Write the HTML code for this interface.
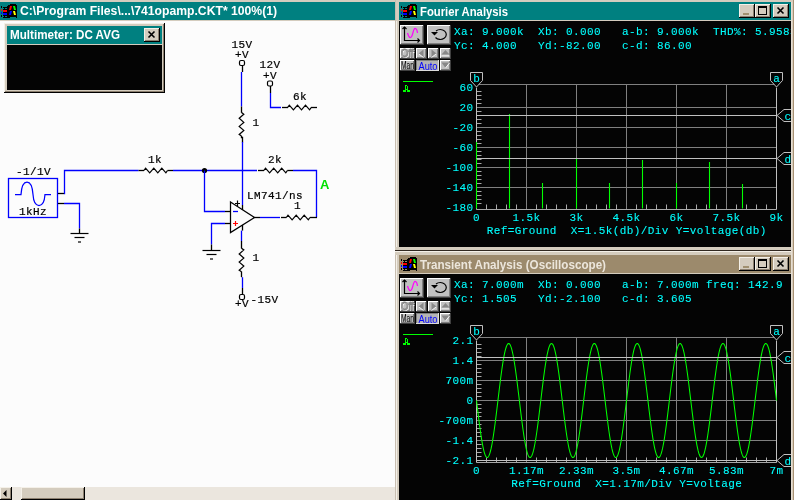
<!DOCTYPE html>
<html><head><meta charset="utf-8"><style>
html,body{margin:0;padding:0;width:794px;height:500px;overflow:hidden;background:#d4ccbe}
svg{display:block;will-change:transform}
.title{font-family:"Liberation Sans",sans-serif;font-weight:bold;font-size:12px;fill:#ffffff}
.mono{font-family:"Liberation Mono",monospace;font-size:11px;letter-spacing:0.4px;fill:#00ffff;stroke:#00ffff;stroke-width:0.1px}
.circ{font-family:"Liberation Mono",monospace;font-size:11px;letter-spacing:0.4px;fill:#000;stroke:#000;stroke-width:0.2px}
.small{font-family:"Liberation Sans",sans-serif;font-size:11px}
.legend{font-family:"Liberation Mono",monospace;font-size:9px;fill:#00ff00}
.A{font-family:"Liberation Sans",sans-serif;font-weight:bold;font-size:13px;fill:#00e000}
</style></head><body>
<svg width="794" height="500" viewBox="0 0 794 500">
<rect x="0" y="0" width="794" height="500" fill="#d4ccbe"/>
<rect x="0" y="2" width="395" height="18" fill="#008080"/>
<rect x="0" y="21" width="395" height="466" fill="#fcfcfc"/>
<g shape-rendering="crispEdges">
<path d="M7 6 L9 5 L10 5 L10 4 L16 4 L16 5 L17 5 L17 18 L16 18 L16 17 L10 17 L10 18 L7 18 Z" fill="#000"/>
</g>
<path d="M10 6 L12 6 L11 10 L9 10 Z" fill="#ff0000"/>
<path d="M10 11 L12 11 L11 15 L9 15 Z" fill="#0000ff"/>
<path d="M13 6 L15 6 L16 10 L14 10 Z" fill="#00ff00"/>
<path d="M13 11 L15 11 L16 15 L14 15 Z" fill="#ffff00"/>
<g shape-rendering="crispEdges">
<rect x="3" y="7" width="4" height="1" fill="#000"/>
<rect x="3" y="9" width="4" height="1" fill="#000"/>
<rect x="3" y="10" width="4" height="2" fill="#ff0000"/>
<rect x="3" y="12" width="4" height="1" fill="#000"/>
<rect x="3" y="13" width="4" height="2" fill="#0000ff"/>
<rect x="3" y="15" width="4" height="1" fill="#000"/>
<rect x="3" y="17" width="4" height="1" fill="#000"/>
<rect x="4" y="8" width="1" height="1" fill="#000"/>
<rect x="4" y="16" width="1" height="1" fill="#000"/>
<rect x="1" y="6" width="1" height="2" fill="#000"/>
<rect x="1" y="9" width="1" height="2" fill="#ff0000"/>
<rect x="1" y="12" width="1" height="2" fill="#0000ff"/>
<rect x="1" y="15" width="1" height="2" fill="#000"/>
</g>
<text x="20" y="15" class="title" textLength="257" lengthAdjust="spacingAndGlyphs">C:\Program Files\...\741opamp.CKT* 100%(1)</text>
<rect x="0" y="487" width="395" height="13" fill="#ebe6de"/>
<rect x="0" y="487" width="12" height="13" fill="#000"/>
<rect x="0" y="487" width="11" height="12" fill="#f4f0e8"/>
<rect x="1" y="488" width="10" height="11" fill="#8c8070"/>
<rect x="1" y="488" width="9" height="10" fill="#d4ccbe"/>
<path d="M3 493.5 L6.5 490 L6.5 497 Z" fill="#000"/>
<rect x="21" y="487" width="64" height="13" fill="#000"/>
<rect x="21" y="487" width="63" height="12" fill="#f4f0e8"/>
<rect x="22" y="488" width="62" height="11" fill="#8c8070"/>
<rect x="22" y="488" width="61" height="10" fill="#d4ccbe"/>
<rect x="395" y="0" width="4" height="500" fill="#d4ccbe"/>
<line x1="395.5" y1="0" x2="395.5" y2="500" stroke="#c8beb0" stroke-width="1"/>
<line x1="396.5" y1="21" x2="396.5" y2="500" stroke="#f4f0e8" stroke-width="1"/>
<rect x="4" y="23" width="161" height="70" fill="#d4ccbe"/>
<line x1="4.5" y1="23" x2="4.5" y2="92" stroke="#f4f0e8" stroke-width="1"/>
<line x1="4" y1="23.5" x2="164" y2="23.5" stroke="#f4f0e8" stroke-width="1"/>
<line x1="164.5" y1="23" x2="164.5" y2="93" stroke="#000" stroke-width="1"/>
<line x1="4" y1="92.5" x2="165" y2="92.5" stroke="#000" stroke-width="1"/>
<line x1="163.5" y1="24" x2="163.5" y2="92" stroke="#8c8070" stroke-width="1"/>
<line x1="5" y1="91.5" x2="164" y2="91.5" stroke="#8c8070" stroke-width="1"/>
<rect x="7" y="26" width="155" height="18" fill="#008080"/>
<rect x="7" y="45" width="155" height="45" fill="#040404"/>
<text x="10" y="39.2" class="title" textLength="110" lengthAdjust="spacingAndGlyphs">Multimeter: DC AVG</text>
<rect x="144" y="28" width="16" height="14" fill="#000"/>
<rect x="144" y="28" width="15" height="13" fill="#f4f0e8"/>
<rect x="145" y="29" width="14" height="12" fill="#8c8070"/>
<rect x="145" y="29" width="13" height="11" fill="#d4ccbe"/>
<path d="M148.5 31.5 L154.5 37.5 M154.5 31.5 L148.5 37.5" stroke="#000" stroke-width="1.6"/>
<rect x="399" y="2" width="392" height="18" fill="#008080"/>
<g shape-rendering="crispEdges">
<path d="M407 6 L409 5 L410 5 L410 4 L416 4 L416 5 L417 5 L417 18 L416 18 L416 17 L410 17 L410 18 L407 18 Z" fill="#000"/>
</g>
<path d="M410 6 L412 6 L411 10 L409 10 Z" fill="#ff0000"/>
<path d="M410 11 L412 11 L411 15 L409 15 Z" fill="#0000ff"/>
<path d="M413 6 L415 6 L416 10 L414 10 Z" fill="#00ff00"/>
<path d="M413 11 L415 11 L416 15 L414 15 Z" fill="#ffff00"/>
<g shape-rendering="crispEdges">
<rect x="403" y="7" width="4" height="1" fill="#000"/>
<rect x="403" y="9" width="4" height="1" fill="#000"/>
<rect x="403" y="10" width="4" height="2" fill="#ff0000"/>
<rect x="403" y="12" width="4" height="1" fill="#000"/>
<rect x="403" y="13" width="4" height="2" fill="#0000ff"/>
<rect x="403" y="15" width="4" height="1" fill="#000"/>
<rect x="403" y="17" width="4" height="1" fill="#000"/>
<rect x="404" y="8" width="1" height="1" fill="#000"/>
<rect x="404" y="16" width="1" height="1" fill="#000"/>
<rect x="401" y="6" width="1" height="2" fill="#000"/>
<rect x="401" y="9" width="1" height="2" fill="#ff0000"/>
<rect x="401" y="12" width="1" height="2" fill="#0000ff"/>
<rect x="401" y="15" width="1" height="2" fill="#000"/>
</g>
<text x="420" y="16" class="title" textLength="88" lengthAdjust="spacingAndGlyphs">Fourier Analysis</text>
<rect x="773" y="4" width="16" height="14" fill="#000"/>
<rect x="773" y="4" width="15" height="13" fill="#f4f0e8"/>
<rect x="774" y="5" width="14" height="12" fill="#8c8070"/>
<rect x="774" y="5" width="13" height="11" fill="#d4ccbe"/>
<path d="M777.5 7.5 L783.5 13.5 M783.5 7.5 L777.5 13.5" stroke="#000" stroke-width="1.6"/>
<rect x="755" y="4" width="16" height="14" fill="#000"/>
<rect x="755" y="4" width="15" height="13" fill="#f4f0e8"/>
<rect x="756" y="5" width="14" height="12" fill="#8c8070"/>
<rect x="756" y="5" width="13" height="11" fill="#d4ccbe"/>
<rect x="758.5" y="6.5" width="8" height="8" fill="none" stroke="#000" stroke-width="1"/>
<rect x="758" y="6" width="9" height="2" fill="#000"/>
<rect x="739" y="4" width="16" height="14" fill="#000"/>
<rect x="739" y="4" width="15" height="13" fill="#f4f0e8"/>
<rect x="740" y="5" width="14" height="12" fill="#8c8070"/>
<rect x="740" y="5" width="13" height="11" fill="#d4ccbe"/>
<rect x="743" y="13" width="6" height="2" fill="#a09070"/>
<rect x="399" y="21" width="392" height="232" fill="#040404"/>
<rect x="400" y="25" width="24" height="20" fill="#404040"/>
<rect x="400" y="25" width="23" height="19" fill="#ffffff"/>
<rect x="401" y="26" width="22" height="18" fill="#808080"/>
<rect x="401" y="26" width="21" height="17" fill="#c0c0c0"/>
<rect x="427" y="25" width="24" height="20" fill="#404040"/>
<rect x="427" y="25" width="23" height="19" fill="#ffffff"/>
<rect x="428" y="26" width="22" height="18" fill="#808080"/>
<rect x="428" y="26" width="21" height="17" fill="#c0c0c0"/>
<path d="M404.5 27 L404.5 40.5 L419.5 40.5" stroke="#000" stroke-width="1.2" fill="none"/>
<path d="M402.5 29 L404.5 27 L406.5 29 M417.5 38.5 L419.5 40.5 L417.5 42.5" stroke="#000" stroke-width="1.2" fill="none"/>
<path d="M407.5 33 Q409 38 410.5 37.5 Q412 37 413 32.5 Q414 28 415.5 28.5 Q417 29 417.5 33" stroke="#ff00ff" stroke-width="1.2" fill="none"/>
<path d="M436 31 A6 5 0 1 1 435.5 37.5" stroke="#000" stroke-width="1.2" fill="none"/>
<path d="M431 32 L438 32 L434.5 35.5 Z" fill="#000"/>
<rect x="400" y="48" width="15" height="11" fill="#404040"/>
<rect x="400" y="48" width="14" height="10" fill="#ffffff"/>
<rect x="401" y="49" width="13" height="9" fill="#808080"/>
<rect x="401" y="49" width="12" height="8" fill="#c0c0c0"/>
<rect x="416" y="48" width="11" height="11" fill="#404040"/>
<rect x="416" y="48" width="10" height="10" fill="#ffffff"/>
<rect x="417" y="49" width="9" height="9" fill="#808080"/>
<rect x="417" y="49" width="8" height="8" fill="#c0c0c0"/>
<rect x="428" y="48" width="11" height="11" fill="#404040"/>
<rect x="428" y="48" width="10" height="10" fill="#ffffff"/>
<rect x="429" y="49" width="9" height="9" fill="#808080"/>
<rect x="429" y="49" width="8" height="8" fill="#c0c0c0"/>
<rect x="440" y="48" width="11" height="11" fill="#404040"/>
<rect x="440" y="48" width="10" height="10" fill="#ffffff"/>
<rect x="441" y="49" width="9" height="9" fill="#808080"/>
<rect x="441" y="49" width="8" height="8" fill="#c0c0c0"/>
<rect x="400" y="60" width="15" height="11" fill="#404040"/>
<rect x="400" y="60" width="14" height="10" fill="#ffffff"/>
<rect x="401" y="61" width="13" height="9" fill="#808080"/>
<rect x="401" y="61" width="12" height="8" fill="#c0c0c0"/>
<rect x="440" y="60" width="11" height="11" fill="#404040"/>
<rect x="440" y="60" width="10" height="10" fill="#ffffff"/>
<rect x="441" y="61" width="9" height="9" fill="#808080"/>
<rect x="441" y="61" width="8" height="8" fill="#c0c0c0"/>
<rect x="416" y="60" width="23" height="11" fill="#dcdcdc"/>
<rect x="416" y="60" width="22" height="10" fill="#808080"/>
<rect x="417" y="61" width="21" height="9" fill="#b4b4b4"/>
<text x="401.8" y="57.8" class="small" fill="#ffffff" textLength="12.5" lengthAdjust="spacingAndGlyphs">Off</text>
<text x="401" y="57" class="small" fill="none" stroke="#808080" stroke-width="0.8" textLength="12.5" lengthAdjust="spacingAndGlyphs">Off</text>
<text x="401" y="69.3" class="small" fill="#000" textLength="13" lengthAdjust="spacingAndGlyphs">Man</text>
<text x="418.5" y="69.8" class="small" fill="#0000ff" textLength="19" lengthAdjust="spacingAndGlyphs">Auto</text>
<path d="M418.5 53.5 L423.5 49.5 L423.5 57.5 Z" fill="#888888"/>
<path d="M419 54 L423.5 57.5" stroke="#ffffff" stroke-width="0.9"/>
<path d="M436.5 53.5 L431.5 49.5 L431.5 57.5 Z" fill="#888888"/>
<path d="M431.5 57.5 L436 54" stroke="#ffffff" stroke-width="0.9"/>
<path d="M441.5 54.5 L445.5 50 L449.5 54.5 Z" fill="#888888"/>
<rect x="441.5" y="55.5" width="8" height="1.2" fill="#ffffff"/>
<rect x="441.5" y="56.7" width="8" height="1" fill="#888888"/>
<path d="M441.5 62.5 L445.5 68 L449.5 62.5 Z" fill="#888888"/>
<path d="M445.5 68 L449.5 63" stroke="#ffffff" stroke-width="0.9"/>
<text x="454" y="35" class="mono" xml:space="preserve">Xa: 9.000k  Xb: 0.000   a-b: 9.000k  THD%: 5.9583</text>
<text x="454" y="49" class="mono" xml:space="preserve">Yc: 4.000   Yd:-82.00   c-d: 86.00</text>
<line x1="403" y1="81.5" x2="433" y2="81.5" stroke="#00ff00" stroke-width="1"/>
<g fill="#00ff00" shape-rendering="crispEdges"><rect x="405" y="85" width="2" height="1"/><rect x="405" y="86" width="1" height="4"/><rect x="407" y="86" width="1" height="4"/><rect x="406" y="89" width="1" height="1"/><rect x="403" y="90" width="3" height="2"/><rect x="407" y="90" width="3" height="2"/></g>
<line x1="476.5" y1="107.5" x2="776.5" y2="107.5" stroke="#808080" stroke-width="1"/>
<line x1="476.5" y1="127.5" x2="776.5" y2="127.5" stroke="#808080" stroke-width="1"/>
<line x1="476.5" y1="147.5" x2="776.5" y2="147.5" stroke="#808080" stroke-width="1"/>
<line x1="476.5" y1="167.5" x2="776.5" y2="167.5" stroke="#808080" stroke-width="1"/>
<line x1="476.5" y1="187.5" x2="776.5" y2="187.5" stroke="#808080" stroke-width="1"/>
<line x1="476.5" y1="84.5" x2="776.5" y2="84.5" stroke="#808080" stroke-width="1"/>
<line x1="526.5" y1="84.5" x2="526.5" y2="209.5" stroke="#808080" stroke-width="1"/>
<line x1="576.5" y1="84.5" x2="576.5" y2="209.5" stroke="#808080" stroke-width="1"/>
<line x1="626.5" y1="84.5" x2="626.5" y2="209.5" stroke="#808080" stroke-width="1"/>
<line x1="676.5" y1="84.5" x2="676.5" y2="209.5" stroke="#808080" stroke-width="1"/>
<line x1="726.5" y1="84.5" x2="726.5" y2="209.5" stroke="#808080" stroke-width="1"/>
<line x1="476.5" y1="91.5" x2="481.5" y2="91.5" stroke="#a8a8a8" stroke-width="1"/>
<line x1="476.5" y1="95.5" x2="481.5" y2="95.5" stroke="#a8a8a8" stroke-width="1"/>
<line x1="476.5" y1="99.5" x2="481.5" y2="99.5" stroke="#a8a8a8" stroke-width="1"/>
<line x1="476.5" y1="103.5" x2="481.5" y2="103.5" stroke="#a8a8a8" stroke-width="1"/>
<line x1="476.5" y1="111.5" x2="481.5" y2="111.5" stroke="#a8a8a8" stroke-width="1"/>
<line x1="476.5" y1="115.5" x2="481.5" y2="115.5" stroke="#a8a8a8" stroke-width="1"/>
<line x1="476.5" y1="119.5" x2="481.5" y2="119.5" stroke="#a8a8a8" stroke-width="1"/>
<line x1="476.5" y1="123.5" x2="481.5" y2="123.5" stroke="#a8a8a8" stroke-width="1"/>
<line x1="476.5" y1="131.5" x2="481.5" y2="131.5" stroke="#a8a8a8" stroke-width="1"/>
<line x1="476.5" y1="135.5" x2="481.5" y2="135.5" stroke="#a8a8a8" stroke-width="1"/>
<line x1="476.5" y1="139.5" x2="481.5" y2="139.5" stroke="#a8a8a8" stroke-width="1"/>
<line x1="476.5" y1="143.5" x2="481.5" y2="143.5" stroke="#a8a8a8" stroke-width="1"/>
<line x1="476.5" y1="151.5" x2="481.5" y2="151.5" stroke="#a8a8a8" stroke-width="1"/>
<line x1="476.5" y1="155.5" x2="481.5" y2="155.5" stroke="#a8a8a8" stroke-width="1"/>
<line x1="476.5" y1="159.5" x2="481.5" y2="159.5" stroke="#a8a8a8" stroke-width="1"/>
<line x1="476.5" y1="163.5" x2="481.5" y2="163.5" stroke="#a8a8a8" stroke-width="1"/>
<line x1="476.5" y1="171.5" x2="481.5" y2="171.5" stroke="#a8a8a8" stroke-width="1"/>
<line x1="476.5" y1="175.5" x2="481.5" y2="175.5" stroke="#a8a8a8" stroke-width="1"/>
<line x1="476.5" y1="179.5" x2="481.5" y2="179.5" stroke="#a8a8a8" stroke-width="1"/>
<line x1="476.5" y1="183.5" x2="481.5" y2="183.5" stroke="#a8a8a8" stroke-width="1"/>
<line x1="476.5" y1="191.5" x2="481.5" y2="191.5" stroke="#a8a8a8" stroke-width="1"/>
<line x1="476.5" y1="195.5" x2="481.5" y2="195.5" stroke="#a8a8a8" stroke-width="1"/>
<line x1="476.5" y1="199.5" x2="481.5" y2="199.5" stroke="#a8a8a8" stroke-width="1"/>
<line x1="476.5" y1="203.5" x2="481.5" y2="203.5" stroke="#a8a8a8" stroke-width="1"/>
<line x1="486.5" y1="204.5" x2="486.5" y2="209.5" stroke="#a8a8a8" stroke-width="1"/>
<line x1="496.5" y1="204.5" x2="496.5" y2="209.5" stroke="#a8a8a8" stroke-width="1"/>
<line x1="506.5" y1="204.5" x2="506.5" y2="209.5" stroke="#a8a8a8" stroke-width="1"/>
<line x1="516.5" y1="204.5" x2="516.5" y2="209.5" stroke="#a8a8a8" stroke-width="1"/>
<line x1="536.5" y1="204.5" x2="536.5" y2="209.5" stroke="#a8a8a8" stroke-width="1"/>
<line x1="546.5" y1="204.5" x2="546.5" y2="209.5" stroke="#a8a8a8" stroke-width="1"/>
<line x1="556.5" y1="204.5" x2="556.5" y2="209.5" stroke="#a8a8a8" stroke-width="1"/>
<line x1="566.5" y1="204.5" x2="566.5" y2="209.5" stroke="#a8a8a8" stroke-width="1"/>
<line x1="586.5" y1="204.5" x2="586.5" y2="209.5" stroke="#a8a8a8" stroke-width="1"/>
<line x1="596.5" y1="204.5" x2="596.5" y2="209.5" stroke="#a8a8a8" stroke-width="1"/>
<line x1="606.5" y1="204.5" x2="606.5" y2="209.5" stroke="#a8a8a8" stroke-width="1"/>
<line x1="616.5" y1="204.5" x2="616.5" y2="209.5" stroke="#a8a8a8" stroke-width="1"/>
<line x1="636.5" y1="204.5" x2="636.5" y2="209.5" stroke="#a8a8a8" stroke-width="1"/>
<line x1="646.5" y1="204.5" x2="646.5" y2="209.5" stroke="#a8a8a8" stroke-width="1"/>
<line x1="656.5" y1="204.5" x2="656.5" y2="209.5" stroke="#a8a8a8" stroke-width="1"/>
<line x1="666.5" y1="204.5" x2="666.5" y2="209.5" stroke="#a8a8a8" stroke-width="1"/>
<line x1="686.5" y1="204.5" x2="686.5" y2="209.5" stroke="#a8a8a8" stroke-width="1"/>
<line x1="696.5" y1="204.5" x2="696.5" y2="209.5" stroke="#a8a8a8" stroke-width="1"/>
<line x1="706.5" y1="204.5" x2="706.5" y2="209.5" stroke="#a8a8a8" stroke-width="1"/>
<line x1="716.5" y1="204.5" x2="716.5" y2="209.5" stroke="#a8a8a8" stroke-width="1"/>
<line x1="736.5" y1="204.5" x2="736.5" y2="209.5" stroke="#a8a8a8" stroke-width="1"/>
<line x1="746.5" y1="204.5" x2="746.5" y2="209.5" stroke="#a8a8a8" stroke-width="1"/>
<line x1="756.5" y1="204.5" x2="756.5" y2="209.5" stroke="#a8a8a8" stroke-width="1"/>
<line x1="766.5" y1="204.5" x2="766.5" y2="209.5" stroke="#a8a8a8" stroke-width="1"/>
<line x1="476.5" y1="209.5" x2="776.5" y2="209.5" stroke="#a8a8a8" stroke-width="1"/>
<line x1="476.5" y1="87.5" x2="476.5" y2="209.5" stroke="#c0c0c0" stroke-width="1"/>
<line x1="776.5" y1="87.5" x2="776.5" y2="209.5" stroke="#c0c0c0" stroke-width="1"/>
<text x="473.5" y="90.7" class="mono" text-anchor="end" >60</text>
<text x="473.5" y="110.7" class="mono" text-anchor="end" >20</text>
<text x="473.5" y="130.7" class="mono" text-anchor="end" >-20</text>
<text x="473.5" y="150.7" class="mono" text-anchor="end" >-60</text>
<text x="473.5" y="170.7" class="mono" text-anchor="end" >-100</text>
<text x="473.5" y="190.7" class="mono" text-anchor="end" >-140</text>
<text x="473.5" y="210.7" class="mono" text-anchor="end" >-180</text>
<text x="476.5" y="220.6" class="mono" text-anchor="middle" >0</text>
<text x="526.5" y="220.6" class="mono" text-anchor="middle" >1.5k</text>
<text x="576.5" y="220.6" class="mono" text-anchor="middle" >3k</text>
<text x="626.5" y="220.6" class="mono" text-anchor="middle" >4.5k</text>
<text x="676.5" y="220.6" class="mono" text-anchor="middle" >6k</text>
<text x="726.5" y="220.6" class="mono" text-anchor="middle" >7.5k</text>
<text x="776.5" y="220.6" class="mono" text-anchor="middle" >9k</text>
<text x="626.7" y="234" class="mono" text-anchor="middle" xml:space="preserve">Ref=Ground  X=1.5k(db)/Div Y=voltage(db)</text>
<line x1="476.5" y1="142" x2="476.5" y2="208.5" stroke="#00ff00" stroke-width="1.1"/>
<line x1="509.5" y1="114" x2="509.5" y2="208.5" stroke="#00ff00" stroke-width="1.1"/>
<line x1="542.5" y1="183" x2="542.5" y2="208.5" stroke="#00ff00" stroke-width="1.1"/>
<line x1="576.5" y1="158" x2="576.5" y2="208.5" stroke="#00ff00" stroke-width="1.1"/>
<line x1="609.5" y1="183" x2="609.5" y2="208.5" stroke="#00ff00" stroke-width="1.1"/>
<line x1="642.5" y1="160" x2="642.5" y2="208.5" stroke="#00ff00" stroke-width="1.1"/>
<line x1="676.5" y1="183" x2="676.5" y2="208.5" stroke="#00ff00" stroke-width="1.1"/>
<line x1="709.5" y1="162" x2="709.5" y2="208.5" stroke="#00ff00" stroke-width="1.1"/>
<line x1="742.5" y1="184" x2="742.5" y2="208.5" stroke="#00ff00" stroke-width="1.1"/>
<rect x="395" y="247" width="399" height="8" fill="#d4ccbe"/>
<line x1="395" y1="250.5" x2="794" y2="250.5" stroke="#302820" stroke-width="1"/>
<line x1="395" y1="251.5" x2="794" y2="251.5" stroke="#f4f0e8" stroke-width="1"/>
<rect x="399" y="255" width="392" height="18" fill="#9c8a6c"/>
<g shape-rendering="crispEdges">
<path d="M407 259 L409 258 L410 258 L410 257 L416 257 L416 258 L417 258 L417 271 L416 271 L416 270 L410 270 L410 271 L407 271 Z" fill="#000"/>
</g>
<path d="M410 259 L412 259 L411 263 L409 263 Z" fill="#ff0000"/>
<path d="M410 264 L412 264 L411 268 L409 268 Z" fill="#0000ff"/>
<path d="M413 259 L415 259 L416 263 L414 263 Z" fill="#00ff00"/>
<path d="M413 264 L415 264 L416 268 L414 268 Z" fill="#ffff00"/>
<g shape-rendering="crispEdges">
<rect x="403" y="260" width="4" height="1" fill="#000"/>
<rect x="403" y="262" width="4" height="1" fill="#000"/>
<rect x="403" y="263" width="4" height="2" fill="#ff0000"/>
<rect x="403" y="265" width="4" height="1" fill="#000"/>
<rect x="403" y="266" width="4" height="2" fill="#0000ff"/>
<rect x="403" y="268" width="4" height="1" fill="#000"/>
<rect x="403" y="270" width="4" height="1" fill="#000"/>
<rect x="404" y="261" width="1" height="1" fill="#000"/>
<rect x="404" y="269" width="1" height="1" fill="#000"/>
<rect x="401" y="259" width="1" height="2" fill="#000"/>
<rect x="401" y="262" width="1" height="2" fill="#ff0000"/>
<rect x="401" y="265" width="1" height="2" fill="#0000ff"/>
<rect x="401" y="268" width="1" height="2" fill="#000"/>
</g>
<text x="420" y="269" class="title" textLength="186" lengthAdjust="spacingAndGlyphs" style="fill:#ece6dc">Transient Analysis (Oscilloscope)</text>
<rect x="773" y="257" width="16" height="14" fill="#000"/>
<rect x="773" y="257" width="15" height="13" fill="#f4f0e8"/>
<rect x="774" y="258" width="14" height="12" fill="#8c8070"/>
<rect x="774" y="258" width="13" height="11" fill="#d4ccbe"/>
<path d="M777.5 260.5 L783.5 266.5 M783.5 260.5 L777.5 266.5" stroke="#000" stroke-width="1.6"/>
<rect x="755" y="257" width="16" height="14" fill="#000"/>
<rect x="755" y="257" width="15" height="13" fill="#f4f0e8"/>
<rect x="756" y="258" width="14" height="12" fill="#8c8070"/>
<rect x="756" y="258" width="13" height="11" fill="#d4ccbe"/>
<rect x="758.5" y="259.5" width="8" height="8" fill="none" stroke="#000" stroke-width="1"/>
<rect x="758" y="259" width="9" height="2" fill="#000"/>
<rect x="739" y="257" width="16" height="14" fill="#000"/>
<rect x="739" y="257" width="15" height="13" fill="#f4f0e8"/>
<rect x="740" y="258" width="14" height="12" fill="#8c8070"/>
<rect x="740" y="258" width="13" height="11" fill="#d4ccbe"/>
<rect x="743" y="266" width="6" height="2" fill="#a09070"/>
<rect x="399" y="274" width="392" height="230" fill="#040404"/>
<rect x="400" y="278" width="24" height="20" fill="#404040"/>
<rect x="400" y="278" width="23" height="19" fill="#ffffff"/>
<rect x="401" y="279" width="22" height="18" fill="#808080"/>
<rect x="401" y="279" width="21" height="17" fill="#c0c0c0"/>
<rect x="427" y="278" width="24" height="20" fill="#404040"/>
<rect x="427" y="278" width="23" height="19" fill="#ffffff"/>
<rect x="428" y="279" width="22" height="18" fill="#808080"/>
<rect x="428" y="279" width="21" height="17" fill="#c0c0c0"/>
<path d="M404.5 280 L404.5 293.5 L419.5 293.5" stroke="#000" stroke-width="1.2" fill="none"/>
<path d="M402.5 282 L404.5 280 L406.5 282 M417.5 291.5 L419.5 293.5 L417.5 295.5" stroke="#000" stroke-width="1.2" fill="none"/>
<path d="M407.5 286 Q409 291 410.5 290.5 Q412 290 413 285.5 Q414 281 415.5 281.5 Q417 282 417.5 286" stroke="#ff00ff" stroke-width="1.2" fill="none"/>
<path d="M436 284 A6 5 0 1 1 435.5 290.5" stroke="#000" stroke-width="1.2" fill="none"/>
<path d="M431 285 L438 285 L434.5 288.5 Z" fill="#000"/>
<rect x="400" y="301" width="15" height="11" fill="#404040"/>
<rect x="400" y="301" width="14" height="10" fill="#ffffff"/>
<rect x="401" y="302" width="13" height="9" fill="#808080"/>
<rect x="401" y="302" width="12" height="8" fill="#c0c0c0"/>
<rect x="416" y="301" width="11" height="11" fill="#404040"/>
<rect x="416" y="301" width="10" height="10" fill="#ffffff"/>
<rect x="417" y="302" width="9" height="9" fill="#808080"/>
<rect x="417" y="302" width="8" height="8" fill="#c0c0c0"/>
<rect x="428" y="301" width="11" height="11" fill="#404040"/>
<rect x="428" y="301" width="10" height="10" fill="#ffffff"/>
<rect x="429" y="302" width="9" height="9" fill="#808080"/>
<rect x="429" y="302" width="8" height="8" fill="#c0c0c0"/>
<rect x="440" y="301" width="11" height="11" fill="#404040"/>
<rect x="440" y="301" width="10" height="10" fill="#ffffff"/>
<rect x="441" y="302" width="9" height="9" fill="#808080"/>
<rect x="441" y="302" width="8" height="8" fill="#c0c0c0"/>
<rect x="400" y="313" width="15" height="11" fill="#404040"/>
<rect x="400" y="313" width="14" height="10" fill="#ffffff"/>
<rect x="401" y="314" width="13" height="9" fill="#808080"/>
<rect x="401" y="314" width="12" height="8" fill="#c0c0c0"/>
<rect x="440" y="313" width="11" height="11" fill="#404040"/>
<rect x="440" y="313" width="10" height="10" fill="#ffffff"/>
<rect x="441" y="314" width="9" height="9" fill="#808080"/>
<rect x="441" y="314" width="8" height="8" fill="#c0c0c0"/>
<rect x="416" y="313" width="23" height="11" fill="#dcdcdc"/>
<rect x="416" y="313" width="22" height="10" fill="#808080"/>
<rect x="417" y="314" width="21" height="9" fill="#b4b4b4"/>
<text x="401.8" y="310.8" class="small" fill="#ffffff" textLength="12.5" lengthAdjust="spacingAndGlyphs">Off</text>
<text x="401" y="310" class="small" fill="none" stroke="#808080" stroke-width="0.8" textLength="12.5" lengthAdjust="spacingAndGlyphs">Off</text>
<text x="401" y="322.3" class="small" fill="#000" textLength="13" lengthAdjust="spacingAndGlyphs">Man</text>
<text x="418.5" y="322.8" class="small" fill="#0000ff" textLength="19" lengthAdjust="spacingAndGlyphs">Auto</text>
<path d="M418.5 306.5 L423.5 302.5 L423.5 310.5 Z" fill="#888888"/>
<path d="M419 307 L423.5 310.5" stroke="#ffffff" stroke-width="0.9"/>
<path d="M436.5 306.5 L431.5 302.5 L431.5 310.5 Z" fill="#888888"/>
<path d="M431.5 310.5 L436 307" stroke="#ffffff" stroke-width="0.9"/>
<path d="M441.5 307.5 L445.5 303 L449.5 307.5 Z" fill="#888888"/>
<rect x="441.5" y="308.5" width="8" height="1.2" fill="#ffffff"/>
<rect x="441.5" y="309.7" width="8" height="1" fill="#888888"/>
<path d="M441.5 315.5 L445.5 321 L449.5 315.5 Z" fill="#888888"/>
<path d="M445.5 321 L449.5 316" stroke="#ffffff" stroke-width="0.9"/>
<text x="454" y="288" class="mono" xml:space="preserve">Xa: 7.000m  Xb: 0.000   a-b: 7.000m freq: 142.9</text>
<text x="454" y="302" class="mono" xml:space="preserve">Yc: 1.505   Yd:-2.100   c-d: 3.605</text>
<line x1="403" y1="334.5" x2="433" y2="334.5" stroke="#00ff00" stroke-width="1"/>
<g fill="#00ff00" shape-rendering="crispEdges"><rect x="405" y="338" width="2" height="1"/><rect x="405" y="339" width="1" height="4"/><rect x="407" y="339" width="1" height="4"/><rect x="406" y="342" width="1" height="1"/><rect x="403" y="343" width="3" height="2"/><rect x="407" y="343" width="3" height="2"/></g>
<line x1="476.5" y1="360.5" x2="776.5" y2="360.5" stroke="#808080" stroke-width="1"/>
<line x1="476.5" y1="380.5" x2="776.5" y2="380.5" stroke="#808080" stroke-width="1"/>
<line x1="476.5" y1="400.5" x2="776.5" y2="400.5" stroke="#808080" stroke-width="1"/>
<line x1="476.5" y1="420.5" x2="776.5" y2="420.5" stroke="#808080" stroke-width="1"/>
<line x1="476.5" y1="440.5" x2="776.5" y2="440.5" stroke="#808080" stroke-width="1"/>
<line x1="476.5" y1="460.5" x2="776.5" y2="460.5" stroke="#808080" stroke-width="1"/>
<line x1="476.5" y1="337.5" x2="776.5" y2="337.5" stroke="#808080" stroke-width="1"/>
<line x1="526.5" y1="337.5" x2="526.5" y2="462.5" stroke="#808080" stroke-width="1"/>
<line x1="576.5" y1="337.5" x2="576.5" y2="462.5" stroke="#808080" stroke-width="1"/>
<line x1="626.5" y1="337.5" x2="626.5" y2="462.5" stroke="#808080" stroke-width="1"/>
<line x1="676.5" y1="337.5" x2="676.5" y2="462.5" stroke="#808080" stroke-width="1"/>
<line x1="726.5" y1="337.5" x2="726.5" y2="462.5" stroke="#808080" stroke-width="1"/>
<line x1="476.5" y1="344.5" x2="481.5" y2="344.5" stroke="#a8a8a8" stroke-width="1"/>
<line x1="476.5" y1="348.5" x2="481.5" y2="348.5" stroke="#a8a8a8" stroke-width="1"/>
<line x1="476.5" y1="352.5" x2="481.5" y2="352.5" stroke="#a8a8a8" stroke-width="1"/>
<line x1="476.5" y1="356.5" x2="481.5" y2="356.5" stroke="#a8a8a8" stroke-width="1"/>
<line x1="476.5" y1="364.5" x2="481.5" y2="364.5" stroke="#a8a8a8" stroke-width="1"/>
<line x1="476.5" y1="368.5" x2="481.5" y2="368.5" stroke="#a8a8a8" stroke-width="1"/>
<line x1="476.5" y1="372.5" x2="481.5" y2="372.5" stroke="#a8a8a8" stroke-width="1"/>
<line x1="476.5" y1="376.5" x2="481.5" y2="376.5" stroke="#a8a8a8" stroke-width="1"/>
<line x1="476.5" y1="384.5" x2="481.5" y2="384.5" stroke="#a8a8a8" stroke-width="1"/>
<line x1="476.5" y1="388.5" x2="481.5" y2="388.5" stroke="#a8a8a8" stroke-width="1"/>
<line x1="476.5" y1="392.5" x2="481.5" y2="392.5" stroke="#a8a8a8" stroke-width="1"/>
<line x1="476.5" y1="396.5" x2="481.5" y2="396.5" stroke="#a8a8a8" stroke-width="1"/>
<line x1="476.5" y1="404.5" x2="481.5" y2="404.5" stroke="#a8a8a8" stroke-width="1"/>
<line x1="476.5" y1="408.5" x2="481.5" y2="408.5" stroke="#a8a8a8" stroke-width="1"/>
<line x1="476.5" y1="412.5" x2="481.5" y2="412.5" stroke="#a8a8a8" stroke-width="1"/>
<line x1="476.5" y1="416.5" x2="481.5" y2="416.5" stroke="#a8a8a8" stroke-width="1"/>
<line x1="476.5" y1="424.5" x2="481.5" y2="424.5" stroke="#a8a8a8" stroke-width="1"/>
<line x1="476.5" y1="428.5" x2="481.5" y2="428.5" stroke="#a8a8a8" stroke-width="1"/>
<line x1="476.5" y1="432.5" x2="481.5" y2="432.5" stroke="#a8a8a8" stroke-width="1"/>
<line x1="476.5" y1="436.5" x2="481.5" y2="436.5" stroke="#a8a8a8" stroke-width="1"/>
<line x1="476.5" y1="444.5" x2="481.5" y2="444.5" stroke="#a8a8a8" stroke-width="1"/>
<line x1="476.5" y1="448.5" x2="481.5" y2="448.5" stroke="#a8a8a8" stroke-width="1"/>
<line x1="476.5" y1="452.5" x2="481.5" y2="452.5" stroke="#a8a8a8" stroke-width="1"/>
<line x1="476.5" y1="456.5" x2="481.5" y2="456.5" stroke="#a8a8a8" stroke-width="1"/>
<line x1="486.5" y1="457.5" x2="486.5" y2="462.5" stroke="#a8a8a8" stroke-width="1"/>
<line x1="496.5" y1="457.5" x2="496.5" y2="462.5" stroke="#a8a8a8" stroke-width="1"/>
<line x1="506.5" y1="457.5" x2="506.5" y2="462.5" stroke="#a8a8a8" stroke-width="1"/>
<line x1="516.5" y1="457.5" x2="516.5" y2="462.5" stroke="#a8a8a8" stroke-width="1"/>
<line x1="536.5" y1="457.5" x2="536.5" y2="462.5" stroke="#a8a8a8" stroke-width="1"/>
<line x1="546.5" y1="457.5" x2="546.5" y2="462.5" stroke="#a8a8a8" stroke-width="1"/>
<line x1="556.5" y1="457.5" x2="556.5" y2="462.5" stroke="#a8a8a8" stroke-width="1"/>
<line x1="566.5" y1="457.5" x2="566.5" y2="462.5" stroke="#a8a8a8" stroke-width="1"/>
<line x1="586.5" y1="457.5" x2="586.5" y2="462.5" stroke="#a8a8a8" stroke-width="1"/>
<line x1="596.5" y1="457.5" x2="596.5" y2="462.5" stroke="#a8a8a8" stroke-width="1"/>
<line x1="606.5" y1="457.5" x2="606.5" y2="462.5" stroke="#a8a8a8" stroke-width="1"/>
<line x1="616.5" y1="457.5" x2="616.5" y2="462.5" stroke="#a8a8a8" stroke-width="1"/>
<line x1="636.5" y1="457.5" x2="636.5" y2="462.5" stroke="#a8a8a8" stroke-width="1"/>
<line x1="646.5" y1="457.5" x2="646.5" y2="462.5" stroke="#a8a8a8" stroke-width="1"/>
<line x1="656.5" y1="457.5" x2="656.5" y2="462.5" stroke="#a8a8a8" stroke-width="1"/>
<line x1="666.5" y1="457.5" x2="666.5" y2="462.5" stroke="#a8a8a8" stroke-width="1"/>
<line x1="686.5" y1="457.5" x2="686.5" y2="462.5" stroke="#a8a8a8" stroke-width="1"/>
<line x1="696.5" y1="457.5" x2="696.5" y2="462.5" stroke="#a8a8a8" stroke-width="1"/>
<line x1="706.5" y1="457.5" x2="706.5" y2="462.5" stroke="#a8a8a8" stroke-width="1"/>
<line x1="716.5" y1="457.5" x2="716.5" y2="462.5" stroke="#a8a8a8" stroke-width="1"/>
<line x1="736.5" y1="457.5" x2="736.5" y2="462.5" stroke="#a8a8a8" stroke-width="1"/>
<line x1="746.5" y1="457.5" x2="746.5" y2="462.5" stroke="#a8a8a8" stroke-width="1"/>
<line x1="756.5" y1="457.5" x2="756.5" y2="462.5" stroke="#a8a8a8" stroke-width="1"/>
<line x1="766.5" y1="457.5" x2="766.5" y2="462.5" stroke="#a8a8a8" stroke-width="1"/>
<line x1="476.5" y1="462.5" x2="776.5" y2="462.5" stroke="#a8a8a8" stroke-width="1"/>
<line x1="476.5" y1="340.5" x2="476.5" y2="462.5" stroke="#c0c0c0" stroke-width="1"/>
<line x1="776.5" y1="340.5" x2="776.5" y2="462.5" stroke="#c0c0c0" stroke-width="1"/>
<text x="473.5" y="343.7" class="mono" text-anchor="end" >2.1</text>
<text x="473.5" y="363.7" class="mono" text-anchor="end" >1.4</text>
<text x="473.5" y="383.7" class="mono" text-anchor="end" >700m</text>
<text x="473.5" y="403.7" class="mono" text-anchor="end" >0</text>
<text x="473.5" y="423.7" class="mono" text-anchor="end" >-700m</text>
<text x="473.5" y="443.7" class="mono" text-anchor="end" >-1.4</text>
<text x="473.5" y="463.7" class="mono" text-anchor="end" >-2.1</text>
<text x="476.5" y="473.6" class="mono" text-anchor="middle" >0</text>
<text x="526.5" y="473.6" class="mono" text-anchor="middle" >1.17m</text>
<text x="576.5" y="473.6" class="mono" text-anchor="middle" >2.33m</text>
<text x="626.5" y="473.6" class="mono" text-anchor="middle" >3.5m</text>
<text x="676.5" y="473.6" class="mono" text-anchor="middle" >4.67m</text>
<text x="726.5" y="473.6" class="mono" text-anchor="middle" >5.83m</text>
<text x="776.5" y="473.6" class="mono" text-anchor="middle" >7m</text>
<text x="626.7" y="487" class="mono" text-anchor="middle" xml:space="preserve">Ref=Ground  X=1.17m/Div Y=voltage</text>
<polyline points="476.50,400.50 477.00,404.67 477.50,408.83 478.00,412.93 478.50,416.97 479.00,420.93 479.50,424.77 480.00,428.48 480.50,432.04 481.00,435.44 481.50,438.64 482.00,441.64 482.50,444.42 483.00,446.96 483.50,449.26 484.00,451.29 484.50,453.05 485.00,454.52 485.50,455.71 486.00,456.60 486.50,457.19 487.00,457.47 487.50,457.45 488.00,457.12 488.50,456.49 489.00,455.56 489.50,454.33 490.00,452.81 490.50,451.01 491.00,448.94 491.50,446.61 492.00,444.04 492.50,441.22 493.00,438.19 493.50,434.96 494.00,431.54 494.50,427.96 495.00,424.23 495.50,420.37 496.00,416.40 496.50,412.35 497.00,408.24 497.50,404.08 498.00,399.90 498.50,395.73 499.00,391.58 499.50,387.48 500.00,383.45 500.50,379.52 501.00,375.69 501.50,372.00 502.00,368.46 502.50,365.09 503.00,361.92 503.50,358.95 504.00,356.20 504.50,353.69 505.00,351.44 505.50,349.44 506.00,347.73 506.50,346.29 507.00,345.15 507.50,344.30 508.00,343.75 508.50,343.51 509.00,343.58 509.50,343.95 510.00,344.62 510.50,345.60 511.00,346.87 511.50,348.43 512.00,350.27 512.50,352.37 513.00,354.74 513.50,357.35 514.00,360.19 514.50,363.26 515.00,366.52 515.50,369.96 516.00,373.56 516.50,377.32 517.00,381.19 517.50,385.17 518.00,389.23 518.50,393.36 519.00,397.52 519.50,401.69 520.00,405.86 520.50,410.01 521.00,414.10 521.50,418.11 522.00,422.04 522.50,425.84 523.00,429.52 523.50,433.03 524.00,436.37 524.50,439.52 525.00,442.46 525.50,445.17 526.00,447.64 526.50,449.86 527.00,451.82 527.50,453.50 528.00,454.89 528.50,455.99 529.00,456.80 529.50,457.30 530.00,457.50 530.50,457.39 531.00,456.97 531.50,456.25 532.00,455.24 532.50,453.93 533.00,452.33 533.50,450.45 534.00,448.30 534.50,445.90 535.00,443.26 535.50,440.38 536.00,437.29 536.50,434.00 537.00,430.54 537.50,426.91 538.00,423.14 538.50,419.25 539.00,415.25 539.50,411.18 540.00,407.05 540.50,402.89 541.00,398.71 541.50,394.54 542.00,390.41 542.50,386.32 543.00,382.32 543.50,378.41 544.00,374.62 544.50,370.97 545.00,367.48 545.50,364.17 546.00,361.05 546.50,358.14 547.00,355.46 547.50,353.02 548.00,350.84 548.50,348.92 549.00,347.29 549.50,345.93 550.00,344.87 550.50,344.11 551.00,343.65 551.50,343.50 552.00,343.65 552.50,344.11 553.00,344.87 553.50,345.93 554.00,347.29 554.50,348.92 555.00,350.84 555.50,353.02 556.00,355.46 556.50,358.14 557.00,361.05 557.50,364.17 558.00,367.48 558.50,370.97 559.00,374.62 559.50,378.41 560.00,382.32 560.50,386.32 561.00,390.41 561.50,394.54 562.00,398.71 562.50,402.89 563.00,407.05 563.50,411.18 564.00,415.25 564.50,419.25 565.00,423.14 565.50,426.91 566.00,430.54 566.50,434.00 567.00,437.29 567.50,440.38 568.00,443.26 568.50,445.90 569.00,448.30 569.50,450.45 570.00,452.33 570.50,453.93 571.00,455.24 571.50,456.25 572.00,456.97 572.50,457.39 573.00,457.50 573.50,457.30 574.00,456.80 574.50,455.99 575.00,454.89 575.50,453.50 576.00,451.82 576.50,449.86 577.00,447.64 577.50,445.17 578.00,442.46 578.50,439.52 579.00,436.37 579.50,433.03 580.00,429.52 580.50,425.84 581.00,422.04 581.50,418.11 582.00,414.10 582.50,410.01 583.00,405.86 583.50,401.69 584.00,397.52 584.50,393.36 585.00,389.23 585.50,385.17 586.00,381.19 586.50,377.32 587.00,373.56 587.50,369.96 588.00,366.52 588.50,363.26 589.00,360.19 589.50,357.35 590.00,354.74 590.50,352.37 591.00,350.27 591.50,348.43 592.00,346.87 592.50,345.60 593.00,344.62 593.50,343.95 594.00,343.58 594.50,343.51 595.00,343.75 595.50,344.30 596.00,345.15 596.50,346.29 597.00,347.73 597.50,349.44 598.00,351.44 598.50,353.69 599.00,356.20 599.50,358.95 600.00,361.92 600.50,365.09 601.00,368.46 601.50,372.00 602.00,375.69 602.50,379.52 603.00,383.45 603.50,387.48 604.00,391.58 604.50,395.73 605.00,399.90 605.50,404.08 606.00,408.24 606.50,412.35 607.00,416.40 607.50,420.37 608.00,424.23 608.50,427.96 609.00,431.54 609.50,434.96 610.00,438.19 610.50,441.22 611.00,444.04 611.50,446.61 612.00,448.94 612.50,451.01 613.00,452.81 613.50,454.33 614.00,455.56 614.50,456.49 615.00,457.12 615.50,457.45 616.00,457.47 616.50,457.19 617.00,456.60 617.50,455.71 618.00,454.52 618.50,453.05 619.00,451.29 619.50,449.26 620.00,446.96 620.50,444.42 621.00,441.64 621.50,438.64 622.00,435.44 622.50,432.04 623.00,428.48 623.50,424.77 624.00,420.93 624.50,416.97 625.00,412.93 625.50,408.83 626.00,404.67 626.50,400.50 627.00,396.33 627.50,392.17 628.00,388.07 628.50,384.03 629.00,380.07 629.50,376.23 630.00,372.52 630.50,368.96 631.00,365.56 631.50,362.36 632.00,359.36 632.50,356.58 633.00,354.04 633.50,351.74 634.00,349.71 634.50,347.95 635.00,346.48 635.50,345.29 636.00,344.40 636.50,343.81 637.00,343.53 637.50,343.55 638.00,343.88 638.50,344.51 639.00,345.44 639.50,346.67 640.00,348.19 640.50,349.99 641.00,352.06 641.50,354.39 642.00,356.96 642.50,359.78 643.00,362.81 643.50,366.04 644.00,369.46 644.50,373.04 645.00,376.77 645.50,380.63 646.00,384.60 646.50,388.65 647.00,392.76 647.50,396.92 648.00,401.10 648.50,405.27 649.00,409.42 649.50,413.52 650.00,417.55 650.50,421.48 651.00,425.31 651.50,429.00 652.00,432.54 652.50,435.91 653.00,439.08 653.50,442.05 654.00,444.80 654.50,447.31 655.00,449.56 655.50,451.56 656.00,453.27 656.50,454.71 657.00,455.85 657.50,456.70 658.00,457.25 658.50,457.49 659.00,457.42 659.50,457.05 660.00,456.38 660.50,455.40 661.00,454.13 661.50,452.57 662.00,450.73 662.50,448.63 663.00,446.26 663.50,443.65 664.00,440.81 664.50,437.74 665.00,434.48 665.50,431.04 666.00,427.44 666.50,423.68 667.00,419.81 667.50,415.83 668.00,411.77 668.50,407.64 669.00,403.48 669.50,399.31 670.00,395.14 670.50,390.99 671.00,386.90 671.50,382.89 672.00,378.96 672.50,375.16 673.00,371.48 673.50,367.97 674.00,364.63 674.50,361.48 675.00,358.54 675.50,355.83 676.00,353.36 676.50,351.14 677.00,349.18 677.50,347.50 678.00,346.11 678.50,345.01 679.00,344.20 679.50,343.70 680.00,343.50 680.50,343.61 681.00,344.03 681.50,344.75 682.00,345.76 682.50,347.07 683.00,348.67 683.50,350.55 684.00,352.70 684.50,355.10 685.00,357.74 685.50,360.62 686.00,363.71 686.50,367.00 687.00,370.46 687.50,374.09 688.00,377.86 688.50,381.75 689.00,385.75 689.50,389.82 690.00,393.95 690.50,398.11 691.00,402.29 691.50,406.46 692.00,410.59 692.50,414.68 693.00,418.68 693.50,422.59 694.00,426.38 694.50,430.03 695.00,433.52 695.50,436.83 696.00,439.95 696.50,442.86 697.00,445.54 697.50,447.98 698.00,450.16 698.50,452.08 699.00,453.71 699.50,455.07 700.00,456.13 700.50,456.89 701.00,457.35 701.50,457.50 702.00,457.35 702.50,456.89 703.00,456.13 703.50,455.07 704.00,453.71 704.50,452.08 705.00,450.16 705.50,447.98 706.00,445.54 706.50,442.86 707.00,439.95 707.50,436.83 708.00,433.52 708.50,430.03 709.00,426.38 709.50,422.59 710.00,418.68 710.50,414.68 711.00,410.59 711.50,406.46 712.00,402.29 712.50,398.11 713.00,393.95 713.50,389.82 714.00,385.75 714.50,381.75 715.00,377.86 715.50,374.09 716.00,370.46 716.50,367.00 717.00,363.71 717.50,360.62 718.00,357.74 718.50,355.10 719.00,352.70 719.50,350.55 720.00,348.67 720.50,347.07 721.00,345.76 721.50,344.75 722.00,344.03 722.50,343.61 723.00,343.50 723.50,343.70 724.00,344.20 724.50,345.01 725.00,346.11 725.50,347.50 726.00,349.18 726.50,351.14 727.00,353.36 727.50,355.83 728.00,358.54 728.50,361.48 729.00,364.63 729.50,367.97 730.00,371.48 730.50,375.16 731.00,378.96 731.50,382.89 732.00,386.90 732.50,390.99 733.00,395.14 733.50,399.31 734.00,403.48 734.50,407.64 735.00,411.77 735.50,415.83 736.00,419.81 736.50,423.68 737.00,427.44 737.50,431.04 738.00,434.48 738.50,437.74 739.00,440.81 739.50,443.65 740.00,446.26 740.50,448.63 741.00,450.73 741.50,452.57 742.00,454.13 742.50,455.40 743.00,456.38 743.50,457.05 744.00,457.42 744.50,457.49 745.00,457.25 745.50,456.70 746.00,455.85 746.50,454.71 747.00,453.27 747.50,451.56 748.00,449.56 748.50,447.31 749.00,444.80 749.50,442.05 750.00,439.08 750.50,435.91 751.00,432.54 751.50,429.00 752.00,425.31 752.50,421.48 753.00,417.55 753.50,413.52 754.00,409.42 754.50,405.27 755.00,401.10 755.50,396.92 756.00,392.76 756.50,388.65 757.00,384.60 757.50,380.63 758.00,376.77 758.50,373.04 759.00,369.46 759.50,366.04 760.00,362.81 760.50,359.78 761.00,356.96 761.50,354.39 762.00,352.06 762.50,349.99 763.00,348.19 763.50,346.67 764.00,345.44 764.50,344.51 765.00,343.88 765.50,343.55 766.00,343.53 766.50,343.81 767.00,344.40 767.50,345.29 768.00,346.48 768.50,347.95 769.00,349.71 769.50,351.74 770.00,354.04 770.50,356.58 771.00,359.36 771.50,362.36 772.00,365.56 772.50,368.96 773.00,372.52 773.50,376.23 774.00,380.07 774.50,384.03 775.00,388.07 775.50,392.17 776.00,396.33 776.50,400.50" fill="none" stroke="#00ff00" stroke-width="1.05"/>
<line x1="476.5" y1="115.5" x2="776.5" y2="115.5" stroke="#c0c0c0" stroke-width="1"/>
<line x1="476.5" y1="158.5" x2="776.5" y2="158.5" stroke="#c0c0c0" stroke-width="1"/>
<path d="M470.5 72.5 L482.5 72.5 L482.5 80.5 L476.5 87.0 L470.5 80.5 Z" fill="#040404" stroke="#c0c0c0" stroke-width="1"/>
<text x="476.8" y="82.0" class="mono" text-anchor="middle" >b</text>
<path d="M770.5 72.5 L782.5 72.5 L782.5 80.5 L776.5 87.0 L770.5 80.5 Z" fill="#040404" stroke="#c0c0c0" stroke-width="1"/>
<text x="776.8" y="82.0" class="mono" text-anchor="middle" >a</text>
<path d="M777 115.5 L784 109.5 L792 109.5 L792 121.5 L784 121.5 Z" fill="#040404" stroke="#c0c0c0" stroke-width="1"/>
<text x="788" y="119.5" class="mono" text-anchor="middle" >c</text>
<path d="M777 158.5 L784 152.5 L792 152.5 L792 164.5 L784 164.5 Z" fill="#040404" stroke="#c0c0c0" stroke-width="1"/>
<text x="788" y="162.5" class="mono" text-anchor="middle" >d</text>
<line x1="476.5" y1="357.5" x2="776.5" y2="357.5" stroke="#c0c0c0" stroke-width="1"/>
<line x1="476.5" y1="460.5" x2="776.5" y2="460.5" stroke="#c0c0c0" stroke-width="1"/>
<path d="M470.5 325.5 L482.5 325.5 L482.5 333.5 L476.5 340.0 L470.5 333.5 Z" fill="#040404" stroke="#c0c0c0" stroke-width="1"/>
<text x="476.8" y="335.0" class="mono" text-anchor="middle" >b</text>
<path d="M770.5 325.5 L782.5 325.5 L782.5 333.5 L776.5 340.0 L770.5 333.5 Z" fill="#040404" stroke="#c0c0c0" stroke-width="1"/>
<text x="776.8" y="335.0" class="mono" text-anchor="middle" >a</text>
<path d="M777 357.5 L784 351.5 L792 351.5 L792 363.5 L784 363.5 Z" fill="#040404" stroke="#c0c0c0" stroke-width="1"/>
<text x="788" y="361.5" class="mono" text-anchor="middle" >c</text>
<path d="M777 460.5 L784 454.5 L792 454.5 L792 466.5 L784 466.5 Z" fill="#040404" stroke="#c0c0c0" stroke-width="1"/>
<text x="788" y="464.5" class="mono" text-anchor="middle" >d</text>
<rect x="791" y="0" width="3" height="500" fill="#d8ccbc"/>
<rect x="791" y="2" width="1" height="498" fill="#e6ded2"/>
<rect x="793" y="0" width="1" height="500" fill="#a89274"/>
<rect x="791" y="2" width="1" height="18" fill="#e6ded2"/>
<rect x="791" y="255" width="1" height="18" fill="#e6ded2"/>
<rect x="8.5" y="178.5" width="49" height="39" fill="none" stroke="#0000ff" stroke-width="1.3"/>
<path d="M15 194.5 L21 194.5 C21.5 186 23 182 27 182 C31 182 32.5 187 33 194.5 C33.5 202 35 205.5 39 205.5 C43 205.5 44.5 202 45 194.5 L51 194.5" fill="none" stroke="#0000ff" stroke-width="1.25"/>
<text x="33.5" y="175.2" class="circ" text-anchor="middle" >-1/1V</text>
<text x="33" y="215.2" class="circ" text-anchor="middle" >1kHz</text>
<path d="M58 193.5 L64 193.5" fill="none" stroke="#000" stroke-width="1.3"/>
<path d="M64 193.5 L64.5 193.5 L64.5 170.5 L138.5 170.5" fill="none" stroke="#0000ff" stroke-width="1.3"/>
<path d="M58 203.5 L64 203.5" fill="none" stroke="#000" stroke-width="1.3"/>
<path d="M64 203.5 L79.5 203.5 L79.5 228.5" fill="none" stroke="#0000ff" stroke-width="1.3"/>
<path d="M79.5 228.5 L79.5 234" fill="none" stroke="#000" stroke-width="1.3"/>
<line x1="70.5" y1="233.5" x2="88.5" y2="233.5" stroke="#000" stroke-width="1.2"/>
<line x1="74.5" y1="237.5" x2="84.5" y2="237.5" stroke="#000" stroke-width="1.2"/>
<line x1="78.0" y1="242.0" x2="81.0" y2="242.0" stroke="#000" stroke-width="1.2"/>
<path d="M138.5 170.5 L144 170.5" fill="none" stroke="#000" stroke-width="1.3"/>
<polyline points="143.9,170.5 145.6,168.2 149.7,172.8 153.8,168.2 157.8,172.8 161.8,168.2 165.9,172.8 167.5,170.5" fill="none" stroke="#000" stroke-width="1.25"/>
<path d="M167.5 170.5 L173 170.5" fill="none" stroke="#000" stroke-width="1.3"/>
<text x="155" y="163.39999999999998" class="circ" text-anchor="middle" >1k</text>
<path d="M173 170.5 L257 170.5" fill="none" stroke="#0000ff" stroke-width="1.3"/>
<circle cx="204.5" cy="170.5" r="2.6" fill="#000"/>
<path d="M204.5 170.5 L204.5 211.5 L225 211.5" fill="none" stroke="#0000ff" stroke-width="1.3"/>
<path d="M225 211.5 L230.5 211.5" fill="none" stroke="#000" stroke-width="1.3"/>
<path d="M258 170.5 L264 170.5" fill="none" stroke="#000" stroke-width="1.3"/>
<polyline points="263.8,170.5 265.5,168.2 269.6,172.8 273.7,168.2 277.7,172.8 281.7,168.2 285.8,172.8 287.4,170.5" fill="none" stroke="#000" stroke-width="1.25"/>
<path d="M287.3 170.5 L293 170.5" fill="none" stroke="#000" stroke-width="1.3"/>
<text x="275" y="163.2" class="circ" text-anchor="middle" >2k</text>
<path d="M293 170.5 L316.5 170.5 L316.5 217.5" fill="none" stroke="#0000ff" stroke-width="1.3"/>
<path d="M310 217.5 L317 217.5" fill="none" stroke="#000" stroke-width="1.3"/>
<text x="320" y="189" class="A">A</text>
<path d="M230.5 202 L254.5 217.5 L230.5 232.5 Z" fill="none" stroke="#000" stroke-width="1.25"/>
<path d="M233 211.5 L238 211.5" fill="none" stroke="#0000ff" stroke-width="1.3"/>
<path d="M235.5 221 L235.5 226 M233 223.5 L238 223.5" stroke="#ff0000" stroke-width="1.2"/>
<path d="M237.5 200.5 L237.5 206 M235 203.5 L240 203.5" stroke="#000" stroke-width="1.2"/>
<text x="275" y="199.2" class="circ" text-anchor="middle" >LM741/ns</text>
<path d="M254.5 217.5 L260 217.5" fill="none" stroke="#000" stroke-width="1.3"/>
<path d="M260 217.5 L280 217.5" fill="none" stroke="#0000ff" stroke-width="1.3"/>
<path d="M281 217.5 L286.5 217.5" fill="none" stroke="#000" stroke-width="1.3"/>
<polyline points="286.3,217.5 288.0,215.2 292.1,219.8 296.2,215.2 300.2,219.8 304.2,215.2 308.3,219.8 309.9,217.5" fill="none" stroke="#000" stroke-width="1.25"/>
<text x="297.5" y="209.2" class="circ" text-anchor="middle" >1</text>
<path d="M225 223.5 L230.5 223.5" fill="none" stroke="#000" stroke-width="1.3"/>
<path d="M225 223.5 L211.5 223.5 L211.5 244.5" fill="none" stroke="#0000ff" stroke-width="1.3"/>
<path d="M211.5 244.5 L211.5 250" fill="none" stroke="#000" stroke-width="1.3"/>
<line x1="202.5" y1="250.5" x2="220.5" y2="250.5" stroke="#000" stroke-width="1.2"/>
<line x1="206.5" y1="254.5" x2="216.5" y2="254.5" stroke="#000" stroke-width="1.2"/>
<line x1="210.0" y1="259.0" x2="213.0" y2="259.0" stroke="#000" stroke-width="1.2"/>
<path d="M242.5 66 L242.5 72" fill="none" stroke="#000" stroke-width="1.3"/>
<path d="M241.5 72 L241.5 106.5" fill="none" stroke="#0000ff" stroke-width="1.3"/>
<path d="M241.5 106.5 L241.5 112.8" fill="none" stroke="#000" stroke-width="1.3"/>
<polyline points="241.5,112.5 243.8,114.2 239.2,118.3 243.8,122.4 239.2,126.4 243.8,130.4 239.2,134.5 241.5,136.1" fill="none" stroke="#000" stroke-width="1.25"/>
<path d="M241.5 136 L241.5 137.5 L242.5 137.5 L242.5 142.5" fill="none" stroke="#000" stroke-width="1.3"/>
<path d="M242.5 142 L242.5 205" fill="none" stroke="#0000ff" stroke-width="1.3"/>
<path d="M242.5 205 L242.5 210" fill="none" stroke="#000" stroke-width="1.3"/>
<rect x="239.5" y="60.5" width="5" height="5" rx="1.5" fill="none" stroke="#000" stroke-width="1.2"/>
<text x="242" y="48.2" class="circ" text-anchor="middle" >15V</text>
<text x="242" y="58.2" class="circ" text-anchor="middle" >+V</text>
<text x="256" y="126.2" class="circ" text-anchor="middle" >1</text>
<rect x="267.5" y="81" width="5" height="5" rx="1.5" fill="none" stroke="#000" stroke-width="1.2"/>
<path d="M270.5 86 L270.5 93" fill="none" stroke="#000" stroke-width="1.3"/>
<path d="M270.5 93 L270.5 107.5 L281 107.5" fill="none" stroke="#0000ff" stroke-width="1.3"/>
<path d="M282 107.5 L288 107.5" fill="none" stroke="#000" stroke-width="1.3"/>
<polyline points="287.6,107.5 289.3,105.2 293.4,109.8 297.5,105.2 301.5,109.8 305.5,105.2 309.6,109.8 311.2,107.5" fill="none" stroke="#000" stroke-width="1.25"/>
<path d="M311 107.5 L317 107.5" fill="none" stroke="#000" stroke-width="1.3"/>
<text x="270" y="68.2" class="circ" text-anchor="middle" >12V</text>
<text x="270" y="79.2" class="circ" text-anchor="middle" >+V</text>
<text x="300" y="100.2" class="circ" text-anchor="middle" >6k</text>
<path d="M242.5 225 L242.5 230.6" fill="none" stroke="#000" stroke-width="1.3"/>
<path d="M241.5 230.6 L241.5 241" fill="none" stroke="#0000ff" stroke-width="1.3"/>
<path d="M241.5 241 L241.5 248.5" fill="none" stroke="#000" stroke-width="1.3"/>
<polyline points="241.5,248.2 243.8,249.9 239.2,254.0 243.8,258.1 239.2,262.1 243.8,266.1 239.2,270.2 241.5,271.8" fill="none" stroke="#000" stroke-width="1.25"/>
<path d="M241.5 271.5 L241.5 277.2" fill="none" stroke="#000" stroke-width="1.3"/>
<path d="M242.5 277.2 L242.5 288" fill="none" stroke="#0000ff" stroke-width="1.3"/>
<path d="M242.5 288 L242.5 294.5" fill="none" stroke="#000" stroke-width="1.3"/>
<rect x="239.5" y="294.5" width="5" height="5" rx="1.5" fill="none" stroke="#000" stroke-width="1.2"/>
<text x="256" y="261.0" class="circ" text-anchor="middle" >1</text>
<text x="264.5" y="303.2" class="circ" text-anchor="middle" >-15V</text>
<text x="242" y="307.2" class="circ" text-anchor="middle" >+V</text>
</svg>
</body></html>
